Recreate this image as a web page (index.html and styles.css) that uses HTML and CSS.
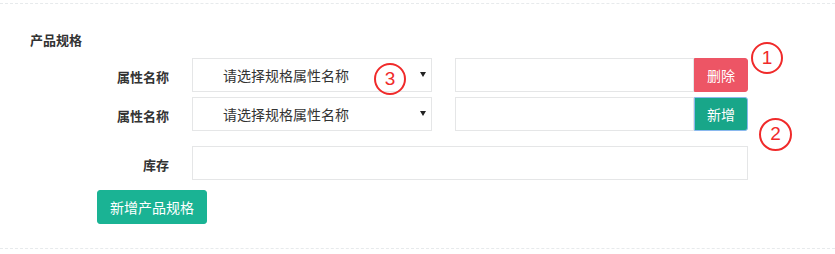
FILE: index.html
```html
<!DOCTYPE html>
<html lang="zh">
<head>
<meta charset="utf-8">
<title>产品规格</title>
<link rel="stylesheet" href="styles.css">
</head>
<body>
<div class="page">
  <div class="hr-dashed"></div>
  <div class="section">
    <h4 class="title">产品规格</h4>
    <div class="form-row">
      <label class="label">属性名称</label>
      <div class="select">
        <span class="select-text">请选择规格属性名称</span>
        <span class="caret"></span>
        <span class="mark mark-3">3</span>
      </div>
      <div class="input-group">
        <div class="input"></div>
        <button class="btn btn-danger">删除</button>
        <span class="mark mark-1">1</span>
      </div>
    </div>
    <div class="form-row row-2">
      <label class="label">属性名称</label>
      <div class="select">
        <span class="select-text">请选择规格属性名称</span>
        <span class="caret"></span>
      </div>
      <div class="input-group">
        <div class="input"></div>
        <button class="btn btn-add">新增</button>
        <span class="mark mark-2">2</span>
      </div>
    </div>
    <div class="form-row row-stock">
      <label class="label">库存</label>
      <div class="input input-wide"></div>
    </div>
    <div class="actions">
      <button class="btn btn-primary">新增产品规格</button>
    </div>
  </div>
  <div class="hr-dashed"></div>
</div>
</body>
</html>
```

FILE: styles.css
```css
* { box-sizing: border-box; }
html, body {
  margin: 0;
  padding: 0;
  background: #ffffff;
}
body {
  font-family: "Noto Sans CJK SC", "Liberation Sans", sans-serif;
  color: #333333;
  font-size: 13px;
}
.page {
  padding-top: 3px;
  width: 835px;
}
.hr-dashed {
  height: 0;
  border-top: 1px dashed #e7eaec;
}
.section {
  padding: 27px 0 24px 0;
}
.title {
  margin: 0 0 9px 30px;
  font-size: 13px;
  line-height: 18px;
  font-weight: bold;
  color: #333333;
}
.form-row {
  display: flex;
  align-items: center;
  height: 34px;
}
.row-2 { margin-top: 5px; }
.row-stock { margin-top: 15px; }
.label {
  width: 169px;
  margin-right: 23px;
  text-align: right;
  font-size: 13px;
  font-weight: bold;
  line-height: 18px;
  padding-top: 3px;
  color: #333333;
}
.select {
  position: relative;
  width: 240px;
  height: 34px;
  border: 1px solid #e5e6e7;
  display: flex;
  align-items: center;
  padding-left: 30px;
  margin-right: 23px;
}
.select-text {
  font-size: 14px;
  color: #333333;
  line-height: 20px;
  flex: 1;
}
.caret {
  width: 0;
  height: 0;
  border-left: 3px solid transparent;
  border-right: 3px solid transparent;
  border-top: 5px solid #222222;
  margin-right: 5px;
  margin-top: -1px;
}
.input-group {
  position: relative;
  display: flex;
  width: 293px;
  height: 34px;
}
.input {
  flex: 1;
  height: 34px;
  border: 1px solid #e5e6e7;
  background: #ffffff;
}
.input-wide {
  flex: none;
  width: 556px;
}
.btn {
  font-family: "Noto Sans CJK SC", "Liberation Sans", sans-serif;
  font-size: 14px;
  color: #ffffff;
  border: 1px solid transparent;
  height: 34px;
  padding: 0;
  line-height: 20px;
  cursor: pointer;
}
.btn-danger {
  width: 54px;
  background: #ed5565;
  border-color: #ed5565;
  border-radius: 0 3px 3px 0;
}
.btn-add {
  width: 54px;
  background: #18a689;
  border-color: #8ab8ee;
  border-radius: 0 3px 3px 0;
}
.actions {
  margin-top: 10px;
  padding-left: 97px;
}
.btn-primary {
  width: 110px;
  background: #1ab394;
  border-color: #1ab394;
  border-radius: 3px;
}
.mark {
  position: absolute;
  width: 32px;
  height: 32px;
  border: 2.5px solid #f02a2a;
  border-radius: 50%;
  color: #f02a2a;
  font-family: "Liberation Sans", sans-serif;
  font-size: 19px;
  line-height: 27px;
  text-align: center;
}
.mark-3 {
  left: 181px;
  top: 4px;
}
.mark-1 {
  left: 296px;
  top: -16px;
}
.mark-2 {
  left: 304px;
  top: 21px;
  width: 33px;
  height: 33px;
  line-height: 28px;
}
```
